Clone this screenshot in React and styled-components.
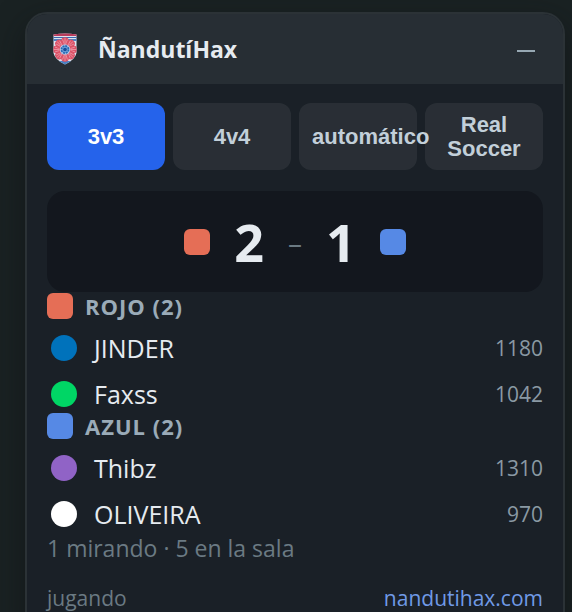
import React from 'react'
import styled, { createGlobalStyle } from 'styled-components'

const modes = ['3v3', '4v4', 'automático', 'Real Soccer']

const teams = [
	{
		name: 'ROJO',
		color: '#e56e56',
		players: [
			{ name: 'JINDER', color: '#0072bb', rating: 1180 },
			{ name: 'Faxss', color: '#00d665', rating: 1042 }
		]
	},
	{
		name: 'AZUL',
		color: '#5689e5',
		players: [
			{ name: 'Thibz', color: '#9063c6', rating: 1310 },
			{ name: 'OLIVEIRA', color: '#ffffff', rating: 970 }
		]
	}
]

const petals = [0, 45, 90, 135, 180, 225, 270, 315]

const Crest = () => (
	<svg width="24" height="32" viewBox="0 0 24 32" aria-hidden="true">
		<defs>
			<clipPath id="shield">
				<path d="M0.5 1.5 Q12 -0.5 23.5 1.5 V20 Q22 27 12 31.5 Q2 27 0.5 20 Z" />
			</clipPath>
		</defs>
		<g clipPath="url(#shield)">
			<rect width="24" height="32" fill="#dfe3ee" />
			<rect width="24" height="3" fill="#b93c5c" />
			<rect y="4" width="24" height="1" fill="#3e68ae" />
			<rect y="6" width="24" height="2" fill="#4c80c0" />
			<rect y="28" width="24" height="4" fill="#4a82c4" />
			{petals.map(angle => (
				<g key={angle} transform={`rotate(${angle} 12 16.5)`}>
					<ellipse cx="12" cy="8.5" rx="4" ry="4.2" fill="#dc5268" />
					<path
						d="M12 5 V11 M9.6 6.5 L11 11 M14.4 6.5 L13 11"
						stroke="#f3a9b4"
						strokeWidth="0.7"
					/>
				</g>
			))}
			<circle cx="12" cy="16.5" r="5.2" fill="#b9cde8" />
			<circle
				cx="12"
				cy="16.5"
				r="3.6"
				fill="#6ba0d6"
				stroke="#2868b5"
				strokeWidth="1.6"
				strokeDasharray="2 0.8"
			/>
			<circle cx="12" cy="16.5" r="1.8" fill="#174c9c" />
		</g>
	</svg>
)

const App = () => {
	const [mode, setMode] = React.useState('3v3')
	return (
		<>
			<GlobalStyle />
			<Card>
				<Header>
					<Crest />
					<h1>ÑandutíHax</h1>
					<Minimize type="button" aria-label="Minimizar">
						<svg width="18" height="18" viewBox="0 0 18 18">
							<path d="M0 11 H18" stroke="#97a8b3" strokeWidth="2" />
						</svg>
					</Minimize>
				</Header>
				<Body>
					<Modes>
						{modes.map(item => (
							<ModeButton
								key={item}
								type="button"
								$active={item === mode}
								onClick={() => setMode(item)}
							>
								{item}
							</ModeButton>
						))}
					</Modes>
					<Score>
						<Swatch $color={teams[0].color} />
						<strong>2</strong>
						<span>–</span>
						<strong>1</strong>
						<Swatch $color={teams[1].color} />
					</Score>
					{teams.map(team => (
						<Team key={team.name}>
							<TeamTitle>
								<Swatch $color={team.color} />
								{team.name} ({team.players.length})
							</TeamTitle>
							{team.players.map(player => (
								<Player key={player.name}>
									<Dot $color={player.color} />
									<span>{player.name}</span>
									<Rating>{player.rating}</Rating>
								</Player>
							))}
						</Team>
					))}
					<Watching>1 mirando · 5 en la sala</Watching>
					<Footer>
						<span>jugando</span>
						<a href="#nandutihax">nandutihax.com</a>
					</Footer>
				</Body>
			</Card>
		</>
	)
}

export default App

const GlobalStyle = createGlobalStyle`
	* {
		box-sizing: border-box;
	}
	body {
		margin: 0;
		height: 100vh;
		overflow: hidden;
		background: #1a2223;
		font-family: 'Segoe UI', 'Open Sans', 'Noto Sans', sans-serif;
		color: #e6ebf0;
	}
`

const Card = styled.main`
	margin: 12px 7px 0 25px;
	border: 2px solid #2b3236;
	border-radius: 22px;
	background: #1a2027;
	box-shadow: 0 12px 32px rgba(15, 17, 20, 0.6);
	overflow: hidden;
`

const Header = styled.header`
	display: flex;
	align-items: center;
	height: 70px;
	padding: 0 28px 0 26px;
	background: #272e34;
	h1 {
		flex: 1;
		margin: 0 0 0 21px;
		font-size: 23px;
		font-weight: 700;
		line-height: 32px;
	}
`

const Minimize = styled.button`
	display: flex;
	padding: 0;
	border: 0;
	background: none;
	cursor: pointer;
`

const Body = styled.div`
	padding: 19px 20px 24px;
`

const Modes = styled.div`
	display: grid;
	grid-template-columns: repeat(4, minmax(0, 1fr));
	gap: 8px;
	margin-bottom: 21px;
`

/* translucent fill, so a long label still shows over its neighbour */
const ModeButton = styled.button`
	display: flex;
	align-items: center;
	justify-content: safe center;
	height: 67px;
	padding: 0 13px;
	border: 0;
	border-radius: 12px;
	background: ${props =>
		props.$active ? '#2563eb' : 'rgba(255, 255, 255, 0.065)'};
	color: ${props => (props.$active ? '#ffffff' : '#c2cfd9')};
	font-family: 'Liberation Sans', Arial, sans-serif;
	font-size: 22px;
	font-weight: 700;
	line-height: 24px;
	cursor: pointer;
`

const Swatch = styled.span`
	flex: none;
	width: 26px;
	height: 26px;
	border-radius: 6px;
	background: ${props => props.$color};
`

const Score = styled.section`
	display: flex;
	align-items: center;
	justify-content: center;
	gap: 24px;
	height: 101px;
	border-radius: 18px;
	background: #13171e;
	strong {
		font-size: 52px;
		line-height: 64px;
	}
	span {
		color: #6b7a83;
		font-size: 28px;
	}
`

const Team = styled.section`
	display: grid;
	gap: 10px;
`

const TeamTitle = styled.h2`
	display: flex;
	align-items: center;
	gap: 12px;
	height: 28px;
	margin: 0;
	color: #9aabb8;
	font-size: 22px;
	font-weight: 700;
	line-height: 28px;
	letter-spacing: 1px;
`

const Player = styled.div`
	display: flex;
	align-items: center;
	gap: 17px;
	padding-left: 4px;
	font-size: 25px;
	line-height: 36px;
`

const Dot = styled.span`
	width: 26px;
	height: 26px;
	border-radius: 50%;
	background: ${props => props.$color};
`

const Rating = styled.span`
	margin-left: auto;
	color: #8a99a4;
	font-size: 21px;
`

const Watching = styled.p`
	margin: 0;
	color: #6b7a83;
	font-size: 23px;
	line-height: 32px;
`

const Footer = styled.footer`
	display: flex;
	justify-content: space-between;
	margin-top: 18px;
	color: #6b7a83;
	font-size: 21px;
	line-height: 32px;
	a {
		color: #709ae6;
		text-decoration: none;
	}
`
